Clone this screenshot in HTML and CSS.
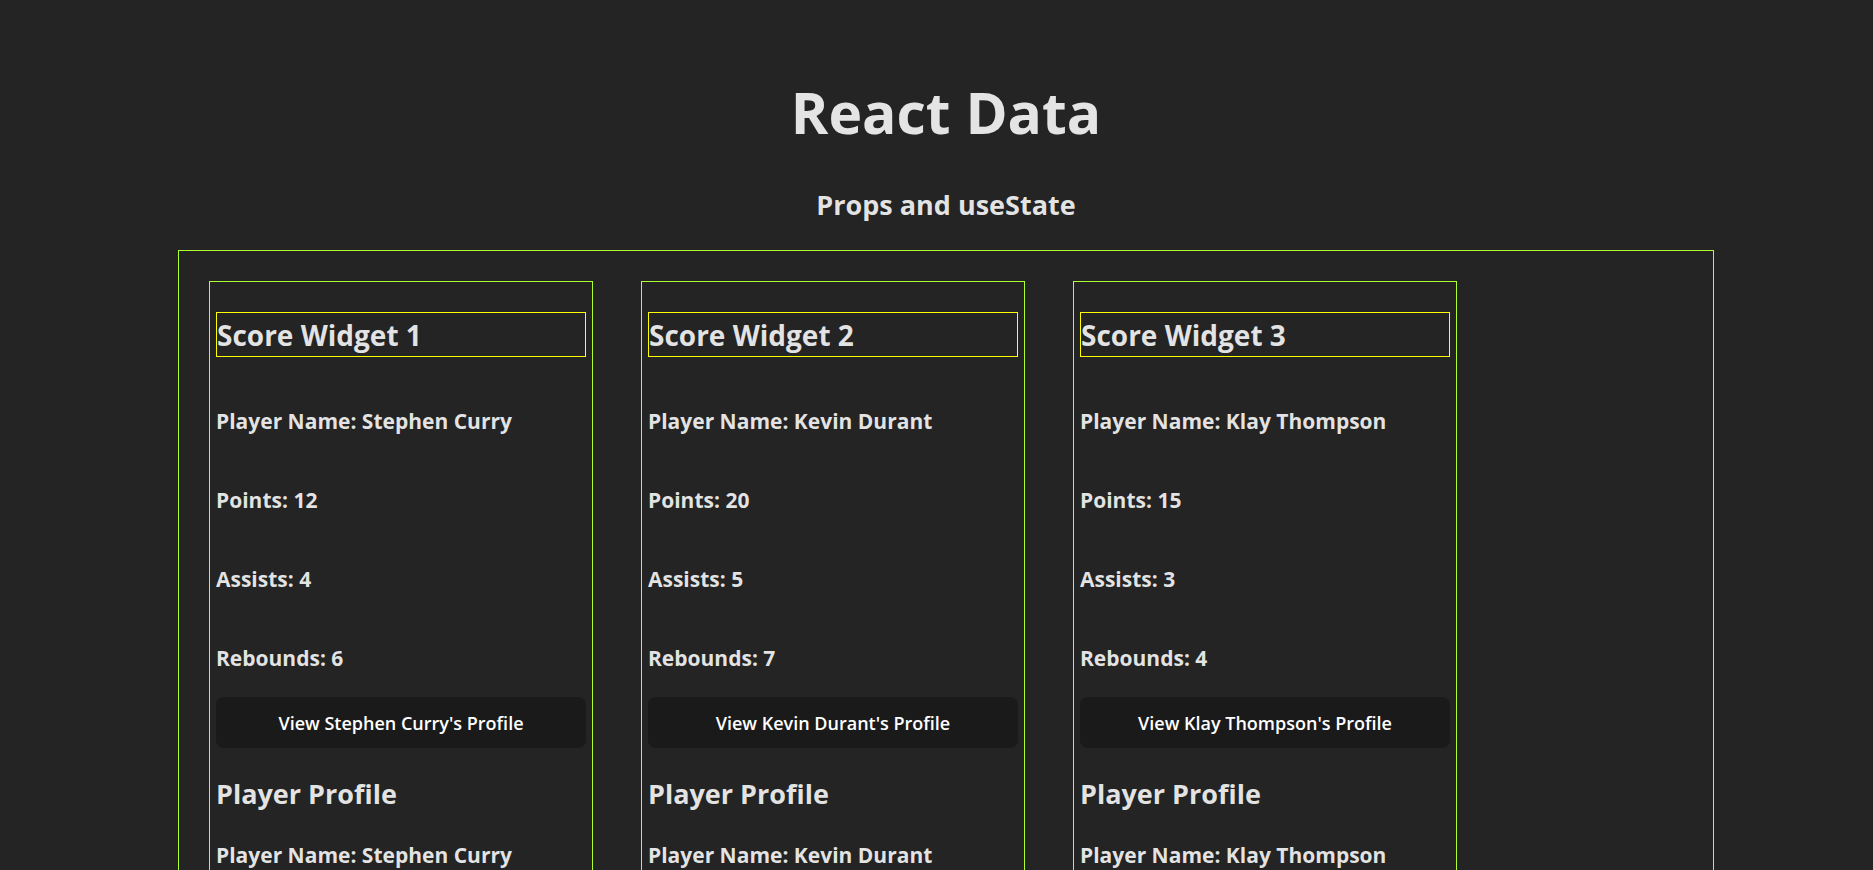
FILE: index.html
```html
<!DOCTYPE html>
<html lang="en">
<head>
<meta charset="utf-8">
<title>React Data</title>
<link rel="stylesheet" href="styles.css">
</head>
<body>
<div class="page">
  <header class="header">
    <h1 class="title">React Data</h1>
    <h2 class="subtitle">Props and useState</h2>
  </header>
  <main class="board">
    <section class="card">
      <h2 class="widget-title">Score Widget 1</h2>
      <h3 class="stat stat-lead">Player Name: Stephen Curry</h3>
      <h3 class="stat">Points: 12</h3>
      <h3 class="stat">Assists: 4</h3>
      <h3 class="stat">Rebounds: 6</h3>
      <button class="profile-btn">View Stephen Curry's Profile</button>
      <h2 class="profile-title">Player Profile</h2>
      <h3 class="stat stat-profile">Player Name: Stephen Curry</h3>
    </section>
    <section class="card">
      <h2 class="widget-title">Score Widget 2</h2>
      <h3 class="stat stat-lead">Player Name: Kevin Durant</h3>
      <h3 class="stat">Points: 20</h3>
      <h3 class="stat">Assists: 5</h3>
      <h3 class="stat">Rebounds: 7</h3>
      <button class="profile-btn">View Kevin Durant's Profile</button>
      <h2 class="profile-title">Player Profile</h2>
      <h3 class="stat stat-profile">Player Name: Kevin Durant</h3>
    </section>
    <section class="card">
      <h2 class="widget-title">Score Widget 3</h2>
      <h3 class="stat stat-lead">Player Name: Klay Thompson</h3>
      <h3 class="stat">Points: 15</h3>
      <h3 class="stat">Assists: 3</h3>
      <h3 class="stat">Rebounds: 4</h3>
      <button class="profile-btn">View Klay Thompson's Profile</button>
      <h2 class="profile-title">Player Profile</h2>
      <h3 class="stat stat-profile">Player Name: Klay Thompson</h3>
    </section>
  </main>
</div>
</body>
</html>
```
FILE: styles.css
```css
html, body {
  margin: 0;
  padding: 0;
  overflow: hidden;
  background: #242424;
}

body {
  font-family: "Open Sans", "Noto Sans", sans-serif;
  color: rgba(255, 255, 255, 0.88);
  height: 870px;
}

.page {
  padding-top: 77px;
}

.header {
  width: 1536px;
  margin-left: 178px;
  text-align: center;
}

.title {
  margin: 0;
  font-size: 57px;
  line-height: 70px;
  font-weight: 700;
}

.subtitle {
  margin: 38px 0 0;
  font-size: 27px;
  line-height: 40px;
  font-weight: 700;
}

.board {
  box-sizing: border-box;
  width: 1536px;
  margin: 25px 0 0 178px;
  border: 1px solid #adff2f;
  padding: 30px;
  display: flex;
  align-items: flex-start;
  gap: 48px;
  height: 800px;
}

.card {
  box-sizing: border-box;
  width: 384px;
  border: 1px solid #adff2f;
  padding: 0 6px 80px;
  display: flex;
  flex-direction: column;
}

.widget-title {
  box-sizing: border-box;
  margin: 30px 0 0;
  height: 45px;
  border: 1px solid #ffff00;
  padding-top: 1px;
  font-size: 28px;
  line-height: 42px;
  font-weight: 700;
}

.stat {
  margin: 47px 0 0;
  font-size: 21px;
  line-height: 32px;
  font-weight: 700;
}

.stat-lead {
  margin-top: 48px;
}

.stat-profile {
  margin-top: 25px;
}

.profile-btn {
  box-sizing: border-box;
  margin-top: 23px;
  height: 51px;
  border: 1px solid transparent;
  border-radius: 8px;
  background: #1a1a1a;
  color: #ffffff;
  font-family: inherit;
  font-size: 18px;
  font-weight: 600;
  padding: 0 20px;
  cursor: pointer;
}

.profile-title {
  margin: 26px 0 0;
  font-size: 27px;
  line-height: 40px;
  font-weight: 700;
}
```
